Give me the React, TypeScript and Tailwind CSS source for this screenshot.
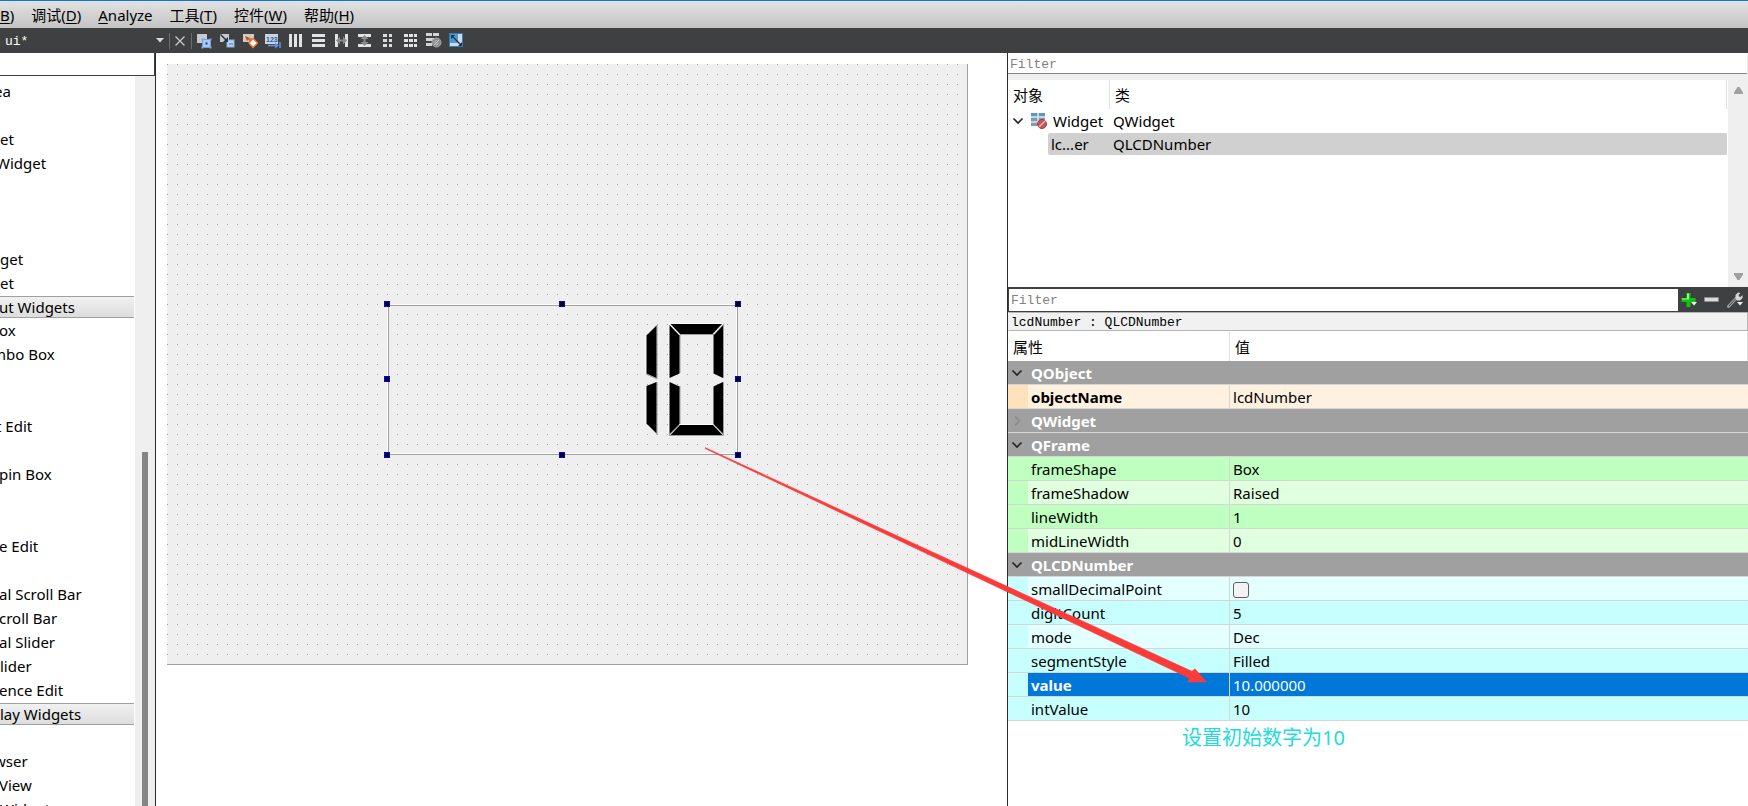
import React from "react";

type Menu = { label: string; hotkey: string; rest: string };

const menus: Menu[] = [
  { label: "", hotkey: "B", rest: ")" },
  { label: "调试(", hotkey: "D", rest: ")" },
  { label: "", hotkey: "A", rest: "nalyze" },
  { label: "工具(", hotkey: "T", rest: ")" },
  { label: "控件(", hotkey: "W", rest: ")" },
  { label: "帮助(", hotkey: "H", rest: ")" },
];

type BoxItem = { text: string; shift?: string; header?: boolean };

const boxItems: BoxItem[] = [
  { text: "ea", shift: "-ml-1.5" },
  { text: "" },
  { text: "et" },
  { text: "Widget", shift: "-ml-1" },
  { text: "" },
  { text: "" },
  { text: "" },
  { text: "get" },
  { text: "et" },
  { text: "ut Widgets", shift: "-ml-px", header: true },
  { text: "ox", shift: "-ml-px" },
  { text: "mbo Box", shift: "-ml-2" },
  { text: "" },
  { text: "" },
  { text: "t Edit", shift: "-ml-1" },
  { text: "" },
  { text: "pin Box", shift: "-ml-px" },
  { text: "" },
  { text: "" },
  { text: "e Edit", shift: "-ml-px" },
  { text: "" },
  { text: "al Scroll Bar", shift: "-ml-px" },
  { text: "croll Bar", shift: "-ml-px" },
  { text: "al Slider", shift: "-ml-px" },
  { text: "lider" },
  { text: "ence Edit", shift: "-ml-px" },
  { text: "lay Widgets", header: true },
  { text: "" },
  { text: "wser", shift: "-ml-1.5" },
  { text: "View", shift: "-ml-px" },
  { text: "Widget" },
];

type PropRow =
  | { kind: "group"; name: string; open: boolean }
  | {
      kind: "prop";
      name: string;
      value: string | boolean;
      tone: string;
      gutter: string;
      bold?: boolean;
    };

const rows: PropRow[] = [
  { kind: "group", name: "QObject", open: true },
  { kind: "prop", name: "objectName", value: "lcdNumber", tone: "bg-[#fff1df]", gutter: "bg-[#ffe1bb]", bold: true },
  { kind: "group", name: "QWidget", open: false },
  { kind: "group", name: "QFrame", open: true },
  { kind: "prop", name: "frameShape", value: "Box", tone: "bg-[#bfffbf]", gutter: "bg-[#bfffbf]" },
  { kind: "prop", name: "frameShadow", value: "Raised", tone: "bg-[#dfffdf]", gutter: "bg-[#bfffbf]" },
  { kind: "prop", name: "lineWidth", value: "1", tone: "bg-[#bfffbf]", gutter: "bg-[#bfffbf]" },
  { kind: "prop", name: "midLineWidth", value: "0", tone: "bg-[#dfffdf]", gutter: "bg-[#bfffbf]" },
  { kind: "group", name: "QLCDNumber", open: true },
  { kind: "prop", name: "smallDecimalPoint", value: false, tone: "bg-[#e3ffff]", gutter: "bg-[#c7ffff]" },
  { kind: "prop", name: "digitCount", value: "5", tone: "bg-[#c7ffff]", gutter: "bg-[#c7ffff]" },
  { kind: "prop", name: "mode", value: "Dec", tone: "bg-[#e3ffff]", gutter: "bg-[#c7ffff]" },
  { kind: "prop", name: "segmentStyle", value: "Filled", tone: "bg-[#c7ffff]", gutter: "bg-[#c7ffff]" },
  { kind: "prop", name: "value", value: "10.000000", tone: "bg-[#0078d9] text-white", gutter: "bg-[#c7ffff]", bold: true },
  { kind: "prop", name: "intValue", value: "10", tone: "bg-[#c7ffff]", gutter: "bg-[#c7ffff]" },
];

const mono = "font-['Liberation_Mono',monospace] text-[13px]";

const toolIcons: { label: string; art: React.ReactNode }[] = [
  {
    label: "Edit Widgets",
    art: (
      <>
        <rect x="1" y="1" width="10" height="9" fill="#c9c9c9" />
        <rect x="6.500" y="6.500" width="8" height="8" fill="#a9c8f4" stroke="#6f9fe6" />
        <path d="M5.500 5.500h2v2h-2zM13.500 5.500h2v2h-2zM5.500 13.500h2v2h-2zM13.500 13.500h2v2h-2z" fill="#7eaaf0" />
        <rect x="9.500" y="9.500" width="2" height="2" fill="#15406f" />
      </>
    ),
  },
  {
    label: "Edit Signals/Slots",
    art: (
      <>
        <rect x="1" y="1" width="9" height="8" fill="#c9c9c9" />
        <rect x="8" y="7" width="7" height="7" fill="#b9d2f3" stroke="#86aee6" />
        <path d="M10 11h4" stroke="#3b6ebc" />
        <path d="M1.500 1.500l6 6" stroke="#1f3653" strokeWidth="1.500" />
        <path d="M9 4v5H4z" fill="#1f3653" />
      </>
    ),
  },
  {
    label: "Edit Buddies",
    art: (
      <>
        <rect x="1" y="1" width="11" height="8" fill="#cfcac6" />
        <path d="M3 3l5 2-3 3z" fill="#b5532c" />
        <path d="M6 6l4-1 1 4-3 1z" fill="#e9672c" />
        <path d="M11 5.500l4.500 4.500-4.500 4.500L7 10z" fill="#fff" stroke="#f07a35" strokeWidth="1.400" />
      </>
    ),
  },
  {
    label: "Edit Tab Order",
    art: (
      <>
        <rect x="0" y="1" width="13" height="10" fill="#ccd3dc" />
        <text x="1" y="9" fontSize="7" fontWeight="700" fontFamily="Liberation Sans" fill="#2a5ea8">
          123
        </text>
        <path d="M3 12.500h8M15 9v6" stroke="#5b94ea" strokeWidth="1.500" />
        <path d="M10 9.500l4 3-4 3z" fill="#5b94ea" />
      </>
    ),
  },
  { label: "Lay Out Horizontally", art: <path d="M1 1h3v13H1zM6 1h3v13H6zM11 1h3v13h-3z" fill="#e2e2e2" /> },
  { label: "Lay Out Vertically", art: <path d="M1 1h13v3H1zM1 6h13v3H1zM1 11h13v3H1z" fill="#e2e2e2" /> },
  {
    label: "Horizontal Splitter",
    art: (
      <>
        <path d="M1 1h3v13H1zM11 1h3v13h-3z" fill="#e2e2e2" />
        <path d="M2 7.500l4-4v3h3v-3l4 4-4 4v-3H6v3z" fill="#8b8b8b" />
      </>
    ),
  },
  {
    label: "Vertical Splitter",
    art: (
      <>
        <path d="M1 1h13v3H1zM1 11h13v3H1z" fill="#e2e2e2" />
        <path d="M7.500 2l4 4h-3v3h3l-4 4-4-4h3V6h-3z" fill="#8b8b8b" />
      </>
    ),
  },
  { label: "Form Layout", art: <path d="M3 1h4v3H3zM9 1h3v3H9zM3 6h4v3H3zM9 6h3v3H9zM3 11h4v3H3zM9 11h3v3H9z" fill="#dadada" /> },
  {
    label: "Grid Layout",
    art: <path d="M1 1h4v3H1zM6 1h4v3H6zM11 1h3v3h-3zM1 6h4v3H1zM6 6h4v3H6zM11 6h3v3h-3zM1 11h4v3H1zM6 11h4v3H6zM11 11h3v3h-3z" fill="#e2e2e2" />,
  },
  {
    label: "Break Layout",
    art: (
      <>
        <path d="M0 0h6v3H0zM7 0h6v3H7zM0 5h9v3H0zM0 10h6v3H0z" fill="#d4d4d4" />
        <circle cx="10.500" cy="9.500" r="4.500" fill="#8c8c8c" stroke="#a9a9a9" />
        <path d="M8 12l5-5M8.500 9l2-1.500M10.500 12l2-2" stroke="#d0d0d0" />
      </>
    ),
  },
  {
    label: "Adjust Size",
    art: (
      <>
        <rect x="0.500" y="0.500" width="13" height="13" fill="#4b9bd0" stroke="#2d7fc0" />
        <path d="M9 1h4v12H1v-3h8z" fill="#d5d9dc" />
        <path d="M3.500 3.500l8 8" stroke="#173450" strokeWidth="1.300" />
        <path d="M2 2h4L2 6zM13 13H9l4-4z" fill="#173450" />
      </>
    ),
  },
];

function Chevron({ open }: { open: boolean }) {
  return (
    <svg viewBox="0 0 12 12" className="size-3" fill="none" strokeWidth="1.600" stroke={open ? "#222" : "#8a8a8a"}>
      <path d={open ? "M1.500 3.500L6 8l4.500-4.500" : "M4 1.500L8.500 6 4 10.500"} />
    </svg>
  );
}

function LcdNumber() {
  const handles = [
    "-left-1 -top-1",
    "left-[171px] -top-1",
    "-right-1 -top-1",
    "-left-1 top-[71px]",
    "-right-1 top-[71px]",
    "-left-1 -bottom-1",
    "left-[171px] -bottom-1",
    "-right-1 -bottom-1",
  ];
  return (
    <div className="absolute left-[220px] top-[240px] h-[151px] w-[351px] border border-white border-r-[#a0a0a0] border-b-[#a0a0a0]">
      <div className="size-full border border-[#a0a0a0] border-r-white border-b-white" />
      <svg viewBox="0 0 90 120" className="absolute right-3 top-[15px] h-[120px] w-[90px]" role="img" aria-label="10">
        <g transform="translate(-635 -320)" strokeWidth="1">
          <g fill="none" stroke="#fff">
            <path d="M646 335v39M646 386v38M669 323v55M669 381v54M669 323.500h54M680 424.500h33M713.500 335v38M669 324l11 11M669 435l11-11" />
          </g>
          <g fill="none" stroke="#a0a0a0">
            <path d="M657 325v54M657 382v53M723.500 324v54M723.500 382v53M669 435.500h55M680 334.500h34M680 335v38M680 386v38M724 324l-10 11M724 435l-10-11M646 374l11 5M669 435l10-10" />
          </g>
          <g fill="#000">
            <path d="M656.500 325.500v52.500l-10-4.500V335.500z" />
            <path d="M656.500 382v51.500l-10-10V386z" />
            <path d="M670.500 324h51.500l-9.500 10h-32.500z" />
            <path d="M669.500 325l10 10.500v38l-10 4.500z" />
            <path d="M723 325.500v52.500l-9.500-4.500v-38z" />
            <path d="M669.500 382l10 4.500v37.500l-10 10z" />
            <path d="M723 382v51.500l-9.500-9.500v-37.500z" />
            <path d="M680 425h33l9.500 10h-52z" />
          </g>
        </g>
      </svg>
      {handles.map((pos) => (
        <span key={pos} className={`absolute size-1.5 border border-[#0000f0] bg-black ${pos}`} />
      ))}
    </div>
  );
}

function WidgetBox() {
  return (
    <aside className="flex w-[156px] shrink-0 flex-col overflow-hidden border-r border-[#2b2c2d] bg-white">
      <input
        aria-label="Filter widgets"
        className="h-[23px] w-full shrink-0 border-b border-r border-[#3f4041] bg-white outline-none"
      />
      <div className="flex min-h-0 flex-1">
        <ul className="min-w-0 flex-1 overflow-hidden pt-1">
          {boxItems.map((item, i) =>
            item.header ? (
              <li
                key={i}
                className="mr-px h-[23px] border-b border-white bg-linear-to-b from-[#f2f2f2] to-[#dcdcdc]"
              >
                <div className="h-[22px] border-y border-[#a0a0a0] leading-5">
                  <span className={`block whitespace-nowrap ${item.shift ?? ""}`}>{item.text}</span>
                </div>
              </li>
            ) : (
              <li key={i} className="h-6 leading-[22px] whitespace-nowrap">
                <span className={`block ${item.shift ?? ""}`}>{item.text}</span>
              </li>
            ),
          )}
        </ul>
        <div className="flex w-5 shrink-0 justify-center bg-[#efefef] pt-[376px]">
          <div className="h-full w-1.5 bg-[#858585]" />
        </div>
      </div>
    </aside>
  );
}

function ObjectInspector() {
  return (
    <section className="flex h-[234px] shrink-0 flex-col bg-[#efefef]">
      <input
        aria-label="Filter objects"
        placeholder="Filter"
        className={`mr-px h-[21px] shrink-0 border-b border-[#868686] bg-white pt-0.5 pl-[2px] outline-none placeholder:text-[#808080] ${mono}`}
      />
      <div className="mt-1.5 flex flex-1">
        <div className="flex-1 bg-white pr-px">
          <table className="w-full table-fixed border-separate border-spacing-0 text-left">
            <thead>
              <tr className="h-[29px]">
                <th className="w-[102px] border-r border-[#e0e0e0] p-0 pl-[5px] font-normal">对象</th>
                <th className="border-r border-[#e0e0e0] p-0 pl-[5px] font-normal">类</th>
              </tr>
            </thead>
            <tbody>
              <tr className="h-6">
                <td className="p-0">
                  <div className="flex items-center pl-1">
                    <Chevron open />
                    <svg viewBox="0 0 16 16" className="ml-[7px] mr-1.5 size-4 shrink-0">
                      <path d="M0 0h14v13H0z" fill="#a9bccb" />
                      <path d="M0 0h6v3H0zM8 0h6v3H8z" fill="#5f97bf" />
                      <path d="M0 5h6v3H0zM8 5h6v3H8zM0 10h6v3H0z" fill="#7f9db4" />
                      <path d="M0 4h14M0 9h14M7 0v13" stroke="#e4edf4" />
                      <circle cx="11" cy="11" r="4.500" fill="#c05a58" stroke="#a83b3b" />
                      <path d="M8 14l6-6" stroke="#e9b8b6" strokeWidth="1.400" />
                    </svg>
                    Widget
                  </div>
                </td>
                <td className="p-0 pl-[3px]">QWidget</td>
              </tr>
              <tr className="h-[22px] leading-[22px]">
                <td className="p-0">
                  <div className="ml-10 rounded-l-xs bg-[#d0d0d0] pl-[3px]">lc...er</div>
                </td>
                <td className="rounded-r-xs bg-[#d0d0d0] p-0 pl-[3px]">QLCDNumber</td>
              </tr>
            </tbody>
          </table>
        </div>
        <div className="flex w-5 flex-col items-center justify-between py-[7px]">
          <svg viewBox="0 0 9 7" className="h-[7px] w-[9px]">
            <path d="M3.500 0h2L9 5.500V7H0V5.500z" fill="#a0a0a0" />
          </svg>
          <svg viewBox="0 0 9 7" className="h-[7px] w-[9px]">
            <path d="M3.500 7h2L9 1.500V0H0v1.500z" fill="#a0a0a0" />
          </svg>
        </div>
      </div>
    </section>
  );
}

function PropertyEditor() {
  return (
    <section className="flex min-h-0 flex-1 flex-col bg-white">
      <div className="flex h-[25px] shrink-0 items-center bg-[#3f4041] pl-px">
        <input
          aria-label="Filter properties"
          placeholder="Filter"
          className={`h-[22px] min-w-0 flex-1 bg-white pt-0.5 pl-[2px] outline-none placeholder:text-[#808080] ${mono}`}
        />
        <div className="flex w-[70px] items-center gap-[7px] pl-[3px]">
          <button aria-label="Add property" className="size-4">
            <svg viewBox="0 0 16 16" className="size-4">
              <path d="M5.500 1h4v5h5v4h-5v5h-4v-5h-5V6h5z" fill="#0fc40f" />
              <path d="M6 1.500h2v6H1v-1h5z" fill="#8dff80" />
              <path d="M10 10h6l-3 3.500z" fill="#f0f0f0" />
            </svg>
          </button>
          <button aria-label="Remove property" className="size-4">
            <svg viewBox="0 0 16 16" className="size-4">
              <rect x="0.500" y="5.500" width="14" height="4" rx="0.500" fill="#dadada" stroke="#8e8e8e" />
            </svg>
          </button>
          <button aria-label="Configure" className="size-4">
            <svg viewBox="0 0 16 16" className="size-4">
              <path d="M1.500 14.500L9 6.500" stroke="#9b9b9b" strokeWidth="3" strokeLinecap="round" />
              <path d="M2 14l7-7.500" stroke="#505050" strokeWidth="1" />
              <path d="M8.500 6.500V3L11 .5l2.500.5-2 2 .5 1.500 1.500.5 2-2V6l-2.500 2.500h-3z" fill="#d6d6d6" />
              <path d="M10 10h6l-3 3.500z" fill="#f0f0f0" />
            </svg>
          </button>
        </div>
      </div>
      <div className={`mb-px h-[19px] shrink-0 border border-[#b4b4b4] border-l-[#efefef] bg-[#f1f1f1] pl-[2px] leading-[19px] ${mono}`}>
        lcdNumber : QLCDNumber
      </div>
      <table className="w-full table-fixed border-separate border-spacing-0 text-left">
        <colgroup>
          <col className="w-5" />
          <col className="w-[202px]" />
          <col />
        </colgroup>
        <thead>
          <tr className="h-[29px]">
            <th colSpan={2} className="border-r border-[#e0e0e0] p-0 pl-[5px] font-normal">
              属性
            </th>
            <th className="border-r border-[#e0e0e0] p-0 pl-[5px] font-normal">值</th>
          </tr>
        </thead>
        <tbody>
          {rows.map((row) =>
            row.kind === "group" ? (
              <tr key={row.name} className="h-6 bg-[#a0a0a0] leading-[21px] text-white">
                <td className="border-b border-[#d6d6d6] p-0 pl-[3px]">
                  <Chevron open={row.open} />
                </td>
                <th colSpan={2} className="border-b border-[#d6d6d6] p-0 pt-0.5 pl-[3px] font-bold">
                  {row.name}
                </th>
              </tr>
            ) : (
              <tr key={row.name} className="h-6 leading-[21px]">
                <td className={`border-b border-[#d6d6d6] p-0 ${row.gutter}`} />
                <td className={`border-r border-b border-[#d6d6d6] p-0 pt-0.5 pl-[3px] ${row.tone} ${row.bold ? "font-bold" : ""}`}>
                  {row.name}
                </td>
                <td className={`border-b border-[#d6d6d6] p-0 pt-0.5 pl-[3px] ${row.tone}`}>
                  {typeof row.value === "boolean" ? (
                    <input
                      type="checkbox"
                      aria-label={row.name}
                      className="block size-4 appearance-none rounded-[3px] border border-[#626262] bg-[#f3f3f3]"
                    />
                  ) : (
                    row.value
                  )}
                </td>
              </tr>
            ),
          )}
        </tbody>
      </table>
      <p className="mt-1 pl-[174px] text-[20px] leading-[26px] text-[#20dcdc]">设置初始数字为10</p>
    </section>
  );
}

export default function App() {
  return (
    <div className="relative flex h-screen flex-col overflow-hidden bg-white font-['Noto_Sans','Noto_Sans_CJK_SC',sans-serif] text-[15px] leading-5 text-black">
      <nav className="flex h-7 shrink-0 items-center gap-[17px] border-t border-[#0c78d4] bg-linear-to-b from-[#e2e2e2] to-[#c4c4c4]">
        {menus.map((m) => (
          <button key={m.hotkey} className="whitespace-nowrap">
            {m.label}
            <span className="underline underline-offset-2">{m.hotkey}</span>
            {m.rest}
          </button>
        ))}
      </nav>

      <div className="flex h-[25px] shrink-0 items-center bg-[#3f4041]">
        <select
          aria-label="Open file"
          className={`w-[156px] appearance-none bg-transparent pt-0.5 pl-[5px] text-white outline-none ${mono}`}
        >
          <option>ui*</option>
        </select>
        <svg viewBox="0 0 8 5" className="pointer-events-none h-[5px] w-2">
          <path d="M0 0h8L4 4.500z" fill="#d8d8d8" />
        </svg>
        <span className="ml-[5px] h-4 w-px bg-[#6c6d6e]" />
        <button aria-label="Close file" className="ml-[5px]">
          <svg viewBox="0 0 10 10" className="size-2.5" stroke="#c8c8c8" strokeWidth="1.300">
            <path d="M.5.5l9 9M9.500.5l-9 9" />
          </svg>
        </button>
        <span className="ml-1.5 h-4 w-px bg-[#6c6d6e]" />
        <div className="ml-1 flex gap-[7px]">
          {toolIcons.map((t) => (
            <button key={t.label} aria-label={t.label} className="size-4">
              <svg viewBox="0 0 16 16" className="size-4" fill="none">
                {t.art}
              </svg>
            </button>
          ))}
        </div>
      </div>

      <div className="flex min-h-0 flex-1">
        <WidgetBox />
        <main className="min-w-0 flex-1 overflow-hidden bg-white pl-[11px] pt-[11px]">
          <div className="relative h-[601px] w-[801px] border-r border-b border-[#a0a0a0] bg-[#efefef] bg-[conic-gradient(from_270deg_at_1px_1px,#a0a0a0_25%,transparent_0)] bg-size-[10px_10px]">
            <LcdNumber />
          </div>
        </main>
        <div className="flex w-[741px] shrink-0 flex-col border-l border-[#2b2c2d]">
          <ObjectInspector />
          <PropertyEditor />
        </div>
      </div>

      <svg viewBox="0 0 502 236" className="pointer-events-none absolute right-[541px] top-[447px] h-[236px] w-[502px]">
        <path
          d="M0 .5L487 224.300 490 221.700 501.500 235H482.500L484.500 231.300 0 1.500z"
          fill="#fb3b3a"
          stroke="#fb3b3a"
          strokeWidth="0.500"
        />
      </svg>
    </div>
  );
}
